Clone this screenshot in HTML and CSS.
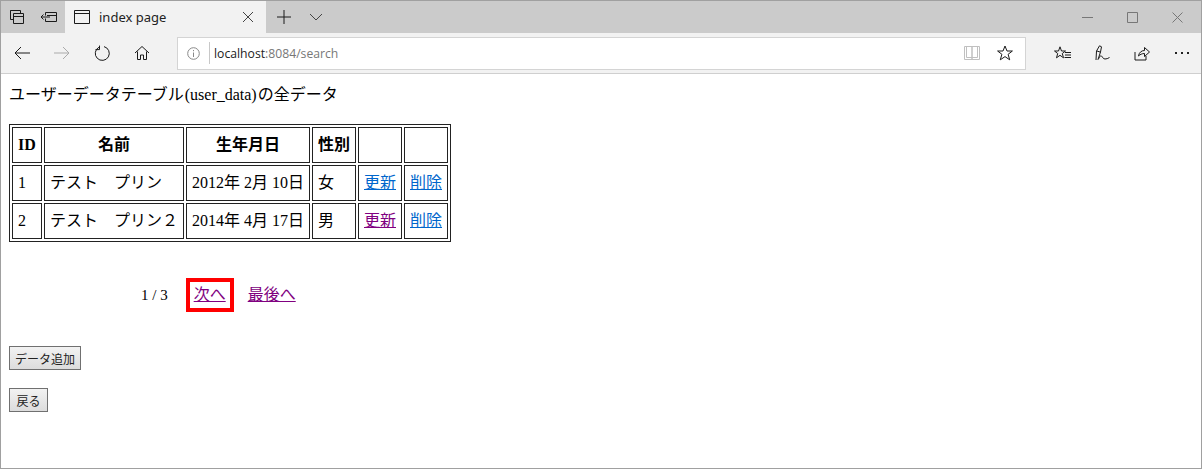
FILE: index.html
```html
<!DOCTYPE html>
<html lang="ja">
<head>
  <meta charset="UTF-8" />
  <title>index page</title>
  <link rel="stylesheet" href="styles.css">
</head>
<body>
<div class="window">

  <!-- title bar -->
  <div class="titlebar">
    <div class="tab-btn">
      <svg width="16" height="16" viewBox="0 0 16 16"><path d="M1.500 4.500v-3h10v3M1.500 1.500v9h3M4.500 4.500h10v10h-10zM4.500 7.500h10" class="ico"/></svg>
    </div>
    <div class="tab-btn">
      <svg width="18" height="16" viewBox="0 0 18 16"><path d="M5.500 3.500h11v9h-11v-3M5.500 6.500v-3M1 8h9M3.500 5.500L1 8l2.500 2.500M7 6.500h9.500" class="ico"/></svg>
    </div>
    <div class="tab">
      <svg width="16" height="14" viewBox="0 0 16 14"><path d="M.5.500h15v13H.5zM.5 3.500h15" class="ico"/></svg>
      <span class="tab-title">index page</span>
      <svg class="tab-close" width="12" height="12" viewBox="0 0 12 12"><path d="M1 1l10 10M11 1L1 11" class="ico-thin"/></svg>
    </div>
    <div class="new-tab">
      <svg width="14" height="14" viewBox="0 0 14 14"><path d="M7 0v14M0 7h14" class="ico"/></svg>
      <svg width="14" height="8" viewBox="0 0 14 8"><path d="M1 1l6 6 6-6" class="ico-thin"/></svg>
    </div>
    <div class="win-btns">
      <svg width="11" height="11" viewBox="0 0 11 11"><path d="M0 5.500h11" class="ico-win"/></svg>
      <svg width="11" height="11" viewBox="0 0 11 11"><path d="M.5.500h10v10H.5z" class="ico-win"/></svg>
      <svg width="11" height="11" viewBox="0 0 11 11"><path d="M.5.500l10 10M10.500.500l-10 10" class="ico-win"/></svg>
    </div>
  </div>

  <!-- toolbar -->
  <div class="toolbar">
    <div class="nav">
      <svg width="16" height="14" viewBox="0 0 16 14"><path d="M16 7H1M7 1L1 7l6 6" class="ico"/></svg>
      <svg width="16" height="14" viewBox="0 0 16 14"><path d="M0 7h15M9 1l6 6-6 6" class="ico-off"/></svg>
      <svg width="16" height="16" viewBox="0 0 16 16"><path d="M5 1.900A7 7 0 1 0 10 1.300M5.500 .3v4h-4" class="ico" transform="translate(0 .3)"/></svg>
      <svg width="16" height="16" viewBox="0 0 16 16"><path d="M1 8l7-6.500L15 8M3.500 6.500v8h3v-4.500h3v4.500h3v-8" class="ico"/></svg>
    </div>
    <div class="addr">
      <svg class="info" width="13" height="13" viewBox="0 0 13 13"><circle cx="6.500" cy="6.500" r="5.800" class="ico-grey"/><path d="M6.500 5.500v4.500M6.500 3v1.200" class="ico-grey"/></svg>
      <span class="addr-sep"></span>
      <span class="url">localhost<span class="url-dim">:8084/search</span></span>
      <svg class="read" width="16" height="14" viewBox="0 0 16 14"><path d="M.5.500h7.500v13H.5zM8 .5h7.500v13H8zM2.500 .5v11h5.500M13.500.5v11H8" class="ico-pale"/></svg>
      <svg class="fav" width="16" height="16" viewBox="0 0 16 16"><path d="M8 1l2 5h5.400l-4.300 3.300 1.600 5.500L8 11.600 3.300 14.800l1.600-5.500L.6 6H6z" class="ico"/></svg>
    </div>
    <div class="tools">
      <svg width="18" height="15" viewBox="0 0 18 15"><path d="M6 .8l1.500 4.200h4L8.300 7.500l1.200 4.300L6 9.300l-3.500 2.500 1.200-4.300L.5 5h4zM11 6.500h6M11 9h6M10.500 11.500h6.500" class="ico"/></svg>
      <svg width="16" height="16" viewBox="0 0 16 16"><path d="M1 15L1.500 6 4.500.8 6.500 1.800 5.500 7 3 14.500C5 12 5 10 6.500 11c1 .8 1.500 3 3.500 3 1.500 0 3-.5 4.500-1.500M2 6l3.500 1.200" class="ico"/></svg>
      <svg width="16" height="15" viewBox="0 0 16 15"><path d="M1 6v8h11V10M4.500 10C5 6.500 7.500 4.500 10.500 4.500V1.500L15.500 6l-5 4.500v-3c-2.500 0-4.500 1-6 2.500z" class="ico"/></svg>
      <svg class="more" width="14" height="2" viewBox="0 0 14 2"><path d="M0 0h2v2H0zM6 0h2v2H6zM12 0h2v2h-2z" class="dots"/></svg>
    </div>
  </div>

  <!-- page -->
  <div class="page">
    <p class="heading">ユーザーデータテーブル<span class="small">(user_data)</span>の全データ</p>

    <table class="data">
      <tr>
        <th class="col-id">ID</th>
        <th class="col-name">名前</th>
        <th class="col-date">生年月日</th>
        <th class="col-sex">性別</th>
        <th class="col-act"></th>
        <th class="col-act"></th>
      </tr>
      <tr>
        <td>1</td>
        <td>テスト　プリン</td>
        <td>2012年 2月 10日</td>
        <td>女</td>
        <td><a href="#a">更新</a></td>
        <td><a href="#b">削除</a></td>
      </tr>
      <tr>
        <td>2</td>
        <td>テスト　プリン２</td>
        <td>2014年 4月 17日</td>
        <td>男</td>
        <td><a href="#c" class="visited">更新</a></td>
        <td><a href="#d">削除</a></td>
      </tr>
    </table>

    <div class="pager">
      <span class="count">1 / 3</span>
      <span class="next"><a href="#e" class="visited">次へ</a></span>
      <a href="#f" class="visited">最後へ</a>
    </div>

    <div class="btn-row"><button>データ追加</button></div>
    <div class="btn-row"><button>戻る</button></div>
  </div>

</div>
</body>
</html>
```

FILE: styles.css
```css
* {
  box-sizing: border-box;
}

html, body {
  margin: 0;
  padding: 0;
  height: 100%;
  background: #fff;
  overflow: hidden;
}

body {
  font-family: "Liberation Serif", "Noto Sans CJK JP", serif;
  font-size: 16px;
  color: #000;
}

.window {
  height: 469px;
  border: 1px solid #a0a0a0;
  display: flex;
  flex-direction: column;
}

svg {
  display: block;
  flex: none;
}

.ico, .ico-thin, .ico-win, .ico-off, .ico-grey, .ico-pale {
  fill: none;
  stroke: #1a1a1a;
  stroke-width: 1;
}

.ico-thin { stroke: #444; }
.ico-win { stroke: #777; }
.ico-off { stroke: #aaa; }
.ico-grey { stroke: #888; }
.ico-pale { stroke: #c0c0c0; }
.dots { fill: #222; }

/* title bar */
.titlebar {
  height: 32px;
  background: #cbcbcb;
  display: flex;
  align-items: stretch;
  font-family: "Noto Sans", sans-serif;
}

.tab-btn {
  width: 32px;
  display: flex;
  align-items: center;
  justify-content: center;
}

.tab {
  width: 201px;
  background: #f2f2f2;
  display: flex;
  align-items: center;
  padding: 0 12px 0 9px;
  font-size: 13px;
  color: #222;
}

.tab-title {
  margin-left: 9px;
  flex: 1;
}

.new-tab {
  display: flex;
  align-items: center;
  gap: 18px;
  padding-left: 11px;
}

.win-btns {
  margin-left: auto;
  display: flex;
  align-items: center;
  gap: 34px;
  padding-right: 18px;
}

/* toolbar */
.toolbar {
  height: 41px;
  background: #f2f2f2;
  border-bottom: 1px solid #cfcfcf;
  display: flex;
  align-items: center;
}

.nav {
  width: 176px;
  display: flex;
  align-items: center;
  gap: 24px;
  padding-left: 13px;
}

.addr {
  width: 849px;
  height: 33px;
  background: #fff;
  border: 1px solid #d4d4d4;
  display: flex;
  align-items: center;
  font-family: "Open Sans", sans-serif;
  font-size: 12.200px;
  color: #222;
}

.info {
  margin-left: 9px;
}

.addr-sep {
  width: 1px;
  height: 22px;
  background: #c8c8c8;
  margin: 0 4px 0 9px;
}

.url {
  flex: 1;
}

.url-dim {
  color: #777;
}

.read {
  margin-right: 17px;
}

.fav {
  margin-right: 12px;
}

.tools {
  flex: 1;
  display: flex;
  align-items: center;
  gap: 23px;
  padding-left: 28px;
}

.more {
  margin-left: 2px;
}

/* page */
.page {
  flex: 1;
  padding: 8px 8px;
}

.heading {
  margin: 0;
  font-size: 16px;
  line-height: 24px;
  height: 24px;
  padding-top: 1px;
}

.small {
  margin: 0 1px;
}

.data {
  margin-top: 18px;
  border: 1px solid #222;
  border-spacing: 2px;
  border-collapse: separate;
  table-layout: fixed;
  width: 442px;
}

.data th, .data td {
  border: 1px solid #222;
  padding: 0 5px;
  height: 36px;
  white-space: nowrap;
  line-height: 20px;
}

.col-id { width: 30px; }
.col-name { width: 140px; }
.col-date { width: 124px; }
.col-sex { width: 44px; }
.col-act { width: 44px; }

a {
  color: #0066cc;
}

a.visited {
  color: #800080;
}

.pager {
  margin-top: 36px;
  display: flex;
  align-items: baseline;
  padding-left: 132px;
}

.count {
  font-size: 15px;
}

.next {
  margin: 0 14px 0 18px;
  border: 4px solid #f00;
  padding: 3px 4px;
  line-height: 20px;
}

.btn-row {
  margin-top: 34px;
  line-height: 0;
}

.btn-row + .btn-row {
  margin-top: 18px;
}

button {
  height: 24px;
  min-width: 39px;
  padding: 0 5px;
  border: 1px solid #707070;
  background: linear-gradient(#f2f2f2, #dcdcdc);
  font-family: "Noto Sans CJK JP", sans-serif;
  font-size: 12px;
  color: #222;
}
```
